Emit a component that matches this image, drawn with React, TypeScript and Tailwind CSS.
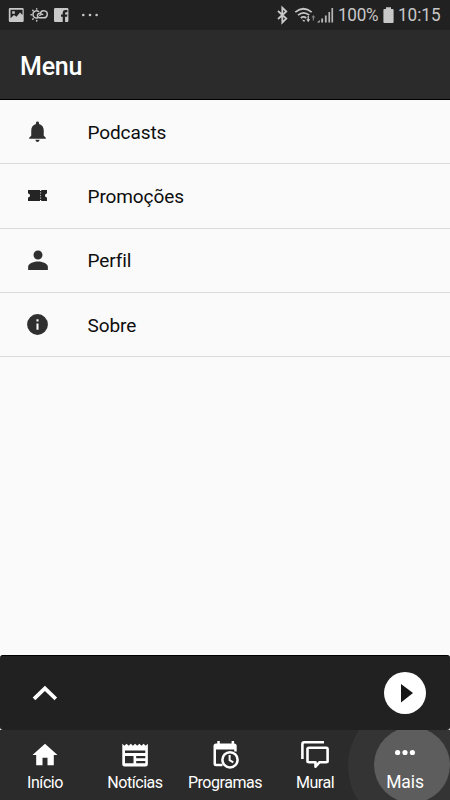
import React from "react";

const ICON = "#2f2f2f";

function StatusBar() {
  return (
    <div className="flex h-[30px] shrink-0 items-center justify-between bg-[#212121] text-[#c8c8c8]">
      <svg width="110" height="30" viewBox="0 0 110 30" fill="none">
        <path
          fillRule="evenodd"
          fill="#c8c8c8"
          d="M10 8h12.500q1.200 0 1.200 1.200v11.600q0 1.200-1.200 1.200H10q-1.200 0-1.200-1.200V9.200Q8.800 8 10 8zM10.500 9.800v8.400l3.500-3.200 2.500 1.800 3.500-4.200 2.500 2.300V9.800zM12.200 11.300h2.600v2.500h-2.600z"
        />
        <g stroke="#c8c8c8" strokeWidth="1.500" strokeLinecap="round">
          <path d="M38.600 11.500a3.600 3.600 0 1 0-.8 6.300" />
          <path d="M36.700 8.700v.4M32.800 10.400l.3.300M31 14.800h.4M32.800 19.200l.3-.3M36.700 20.900v-.3" />
          <path d="M43.500 17.800h-3.700a2.300 2.300 0 1 1 .6-4.500 3.500 3.500 0 1 1 3.100 4.500M42.600 14.400q-1.800-.6-2.800 1" />
        </g>
        <path
          fillRule="evenodd"
          fill="#c8c8c8"
          d="M55.200 8h12q1.200 0 1.200 1.200v11.600q0 1.200-1.200 1.200h-2.100v-5.200h2l.3-2.200h-2.300v-1.400q0-1 1-1h1.300V10.100h-2q-2.700 0-2.700 2.900v1.600h-1.700v2.200h1.700V22h-7.500Q54 22 54 20.800V9.200Q54 8 55.200 8z"
        />
        <g fill="#c8c8c8"><circle cx="83.300" cy="15" r="1.300" /><circle cx="90" cy="15" r="1.300" /><circle cx="96.600" cy="15" r="1.300" /></g>
      </svg>
      <div className="flex items-center pr-[10px]">
        <svg width="62" height="30" viewBox="275 0 62 30" fill="none">
          <path d="M278 11l8.300 7.600-4 3.900V7.700l4 3.800-8.300 7.500" stroke="#c8c8c8" strokeWidth="1.800" />
          <g stroke="#c8c8c8" strokeWidth="1.700">
            <path d="M295.300 12.200q8.200-6.900 16.400 0M298 15.100q5.600-4.600 11.200 0M300.800 18q2.800-2.300 5.400 0" />
          </g>
          <path d="M302 19.500l2 2.500 1.300-1.600zM306.300 19.300h1.300V16h1.300v3.300h1.300l-2 2.900z" fill="#c8c8c8" />
          <path d="M312.800 20.500v-3h-1.300l1.900-2.500 1.900 2.500H314v3z" fill="#808080" />
          <path d="M317 22.500l2.800-2.600v2.600zM321.200 18.500h1.900v4h-1.900zM324.900 15.500h1.800v7h-1.800zM328.400 12h1.700v10.500h-1.700zM331.400 8h1.700v14.500h-1.700z" fill="#b5b5b5" />
        </svg>
        <span className="ml-px w-[40px] whitespace-nowrap text-[18px] leading-[32px] tracking-[-0.3px]"><span className="inline-block origin-left scale-x-95">100%</span></span>
        <svg className="ml-[5px]" width="11" height="30" viewBox="0 0 11 30" fill="#c8c8c8">
          <path d="M3 7.300h5v1.800h1.700q.9 0 .9 1v11.800q0 1-1 1H1.400q-1 0-1-1V10.100q0-1 1-1H3z" />
        </svg>
        <span className="ml-[4px] w-[42px] whitespace-nowrap text-[19px] leading-[32px]"><span className="inline-block origin-left scale-x-90">10:15</span></span>
      </div>
    </div>
  );
}

const items = [
  {
    label: "Podcasts",
    icon: (
      <svg width="25" height="25" viewBox="0 0 24 24" fill={ICON}>
        <path d="M12 22c1.100 0 2-.9 2-2h-4c0 1.100.89 2 2 2zm6-6v-5c0-3.070-1.640-5.640-4.500-6.320V4c0-.83-.67-1.500-1.500-1.500s-1.500.67-1.500 1.500v.68C7.630 5.360 6 7.920 6 11v5l-2 2v1h16v-1l-2-2z" />
      </svg>
    ),
  },
  {
    label: "Promoções",
    icon: (
      <svg width="25" height="25" viewBox="25 184 25 25" fill="#242424">
        <path d="M28 191h12v1h1.200v-1H47v3.500a2 2 0 0 0 0 4v3.500h-5.800v-1H40v1H28v-3.500a2 2 0 0 0 0-4z" />
        <path d="M40.600 193.200v1.500m0 1.100v1.500m0 1.100v1.500" stroke="#bbb" strokeWidth=".9" />
      </svg>
    ),
  },
  {
    label: "Perfil",
    icon: (
      <svg width="30" height="30" viewBox="0 0 24 24" fill={ICON}>
        <path d="M12 11.500c2 0 3.600-1.500 3.600-3.600S14 4.300 12 4.300 8.400 5.900 8.400 7.900s1.600 3.600 3.600 3.600zm0 1.700c-2.670 0-7.900 1.340-7.900 4.200V20h15.800v-2.600c0-2.860-5.230-4.200-7.900-4.200z" />
      </svg>
    ),
  },
  {
    label: "Sobre",
    icon: (
      <svg width="25" height="25" viewBox="0 0 24 24" fill={ICON}>
        <path d="M12 2a10 10 0 1 0 0 20 10 10 0 0 0 0-20zm1 15h-2v-6h2v6zm0-8h-2V7h2v2z" />
      </svg>
    ),
  },
];

const tabs = [
  {
    label: "Início",
    icon: (
      <svg width="30" height="30" viewBox="30 740 30 30" fill="#fff">
        <path d="M45 743.700L57.500 755h-3.700v10.300h-6.300v-7.600h-5v7.600h-6.300V755h-3.700z" />
      </svg>
    ),
  },
  {
    label: "Notícias",
    icon: (
      <svg width="30" height="30" viewBox="120 740 30 30" fill="#fff">
        <path
          fillRule="evenodd"
          d="M122.300 743.700l2.130 2 2.130-2 2.130 2 2.130-2 2.130 2 2.130-2 2.130 2 2.130-2 2.130 2 2.130-2 2.130 2 2.130-2v20.500q0 2.300-2.300 2.300h-21q-2.300 0-2.300-2.300zM125 750.500v2.500h20.300v-2.500zM125 755.900v7.400h8.500v-7.400zM136.200 755.900v2.400h9.100v-2.400zM136.200 760.900v2.400h9.100v-2.400z"
        />
      </svg>
    ),
  },
  {
    label: "Programas",
    icon: (
      <svg width="30" height="30" viewBox="210 740 30 30" fill="none">
        <path d="M217.300 741h2.500v2.400h11.800V741h2.500v2.400q2.600 0 2.600 2.500v5.600h-2.500v-2H216v14.300h6.500v2.500h-6.500q-2.500 0-2.500-2.500v-17.900q0-2.500 2.500-2.500h1.300z" fill="#fff" />
        <circle cx="230" cy="759.800" r="7.600" fill="#2c2c2c" stroke="#fff" strokeWidth="2.500" />
        <path d="M229.600 755v5.200l3.700 2.200" stroke="#fff" strokeWidth="2" />
      </svg>
    ),
  },
  {
    label: "Mural",
    icon: (
      <svg width="30" height="30" viewBox="300 740 30 30" fill="none" stroke="#fff" strokeWidth="2.600" strokeLinejoin="round">
        <path d="M302.400 759v-14.800q0-1.900 1.900-1.900H324" />
        <path d="M308.800 747.800h17.500q1.300 0 1.300 1.300v11.800q0 1.300-1.300 1.300h-6.700l-4.100 4.500v-4.500h-6.700q-1.300 0-1.300-1.300v-11.800q0-1.300 1.300-1.300z" />
      </svg>
    ),
  },
  {
    label: "Mais",
    icon: (
      <svg width="30" height="30" viewBox="390 740 30 30" fill="#fff">
        <circle cx="397.600" cy="752.500" r="2.600" />
        <circle cx="405" cy="752.500" r="2.600" />
        <circle cx="412.400" cy="752.500" r="2.600" />
      </svg>
    ),
  },
];

export default function App() {
  return (
    <div className="flex h-[800px] w-[450px] flex-col overflow-hidden bg-[#fafafa] font-['Roboto',sans-serif]">
      <StatusBar />
      <header className="flex h-[70px] shrink-0 items-center border-b border-black bg-[#2b2b2b] pl-5 pt-[3px]">
        <h1 className="text-[25px] font-medium leading-none tracking-[-0.2px] text-white">Menu</h1>
      </header>
      <main className="flex-1">
        {items.map((item) => (
          <div key={item.label} className="flex h-[64.300px] items-center border-b-[1.500px] border-[#dadada]">
            <div className="flex w-[75px] justify-center">{item.icon}</div>
            <span className="pl-[12.500px] pt-[2px] text-[19px] leading-6 tracking-[-0.1px] text-[#0d0d0d]">{item.label}</span>
          </div>
        ))}
      </main>
      <section className="bg-[#fafafa]">
        <div className="flex h-[75px] items-center justify-between rounded-[3px] border-t border-black bg-[#212121] pb-px pl-[30px] pr-6">
          <svg width="30" height="30" viewBox="30 677 30 30" fill="none" stroke="#fff" strokeWidth="3.700">
            <path d="M34 697.800l10.900-10.500 10.900 10.500" />
          </svg>
          <svg width="42" height="42" viewBox="0 0 42 42">
            <circle cx="21" cy="21" r="21" fill="#fff" />
            <path d="M17 12l12 9-12 9.500z" fill="#151515" />
          </svg>
        </div>
      </section>
      <nav className="relative grid h-[70px] shrink-0 grid-cols-5 overflow-hidden bg-[#2b2b2b]">
        <div className="absolute left-[348px] top-[-28px] h-32 w-32 rounded-full bg-[#343434]" />
        <div className="absolute left-[374px] top-[-3px] h-[76px] w-[76px] rounded-full bg-[#5d5d5d]" />
        {tabs.map((tab) => (
          <div key={tab.label} className="relative flex flex-col items-center pt-[10px] text-white">
            {tab.icon}
            <span className={tab.label === "Mais" ? "text-[17.500px] leading-6 tracking-[-0.1px]" : "pt-px text-[16px] leading-6 tracking-[-0.450px]"}>{tab.label}</span>
          </div>
        ))}
      </nav>
    </div>
  );
}
